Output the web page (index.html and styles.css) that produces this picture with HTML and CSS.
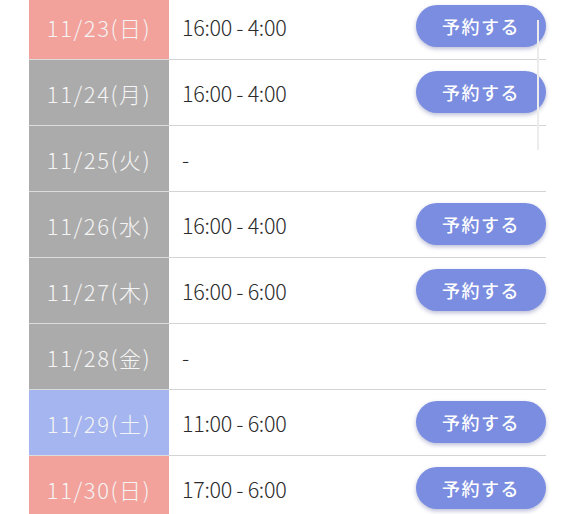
FILE: index.html
```html
<!DOCTYPE html>
<html lang="ja">
<head>
<meta charset="utf-8">
<link rel="stylesheet" href="styles.css">
</head>
<body>
<div class="list">
  <div class="row"><div class="date sun">11/23(日)</div><div class="time">16:00 - 4:00</div><button class="btn">予約する</button></div>
  <div class="row"><div class="date">11/24(月)</div><div class="time">16:00 - 4:00</div><button class="btn">予約する</button></div>
  <div class="row"><div class="date">11/25(火)</div><div class="time">-</div></div>
  <div class="row"><div class="date">11/26(水)</div><div class="time">16:00 - 4:00</div><button class="btn">予約する</button></div>
  <div class="row"><div class="date">11/27(木)</div><div class="time">16:00 - 6:00</div><button class="btn">予約する</button></div>
  <div class="row"><div class="date">11/28(金)</div><div class="time">-</div></div>
  <div class="row"><div class="date sat">11/29(土)</div><div class="time">11:00 - 6:00</div><button class="btn">予約する</button></div>
  <div class="row"><div class="date sun">11/30(日)</div><div class="time">17:00 - 6:00</div><button class="btn">予約する</button></div>
</div>
<div class="scrollbar"></div>
</body>
</html>
```
FILE: styles.css
```css
html, body {
  margin: 0;
  padding: 0;
  background: #fff;
  overflow: hidden;
  height: 514px;
}
body {
  font-family: "Noto Sans CJK JP", "Noto Sans", sans-serif;
  position: relative;
}
.list {
  margin: -6px 0 0 29px;
  width: 517px;
}
.row {
  display: flex;
  align-items: center;
  height: 65px;
  border-bottom: 1px solid #d4d4d4;
}
.date {
  width: 140px;
  height: 100%;
  flex: none;
  display: flex;
  align-items: center;
  justify-content: center;
  background: #ababab;
  color: #f4f4f4;
  font-size: 22px;
  font-weight: 300;
  letter-spacing: 1.6px;
  border-bottom: 1px solid #dcdcdc;
  margin-bottom: -1px;
  box-sizing: content-box;
}
.date.sun { background: #f2a19b; }
.date.sat { background: #a4b5ef; }
.time {
  flex: 1;
  padding-left: 13px;
  color: #2b2b2b;
  font-size: 21.5px;
  font-weight: 300;
  letter-spacing: -0.3px;
}
.btn {
  width: 130px;
  height: 42px;
  border: none;
  border-radius: 21px;
  background: #7a8de0;
  color: #fff;
  font-family: "Noto Sans CJK JP", sans-serif;
  font-size: 18px;
  font-weight: 500;
  letter-spacing: 1.5px;
  box-shadow: 0 2px 4px rgba(60, 70, 140, 0.35);
  margin: -2px 0 0 0;
  padding: 0;
}
.scrollbar {
  position: absolute;
  left: 537px;
  top: 20px;
  width: 2px;
  height: 130px;
  background: #ececec;
}
```
